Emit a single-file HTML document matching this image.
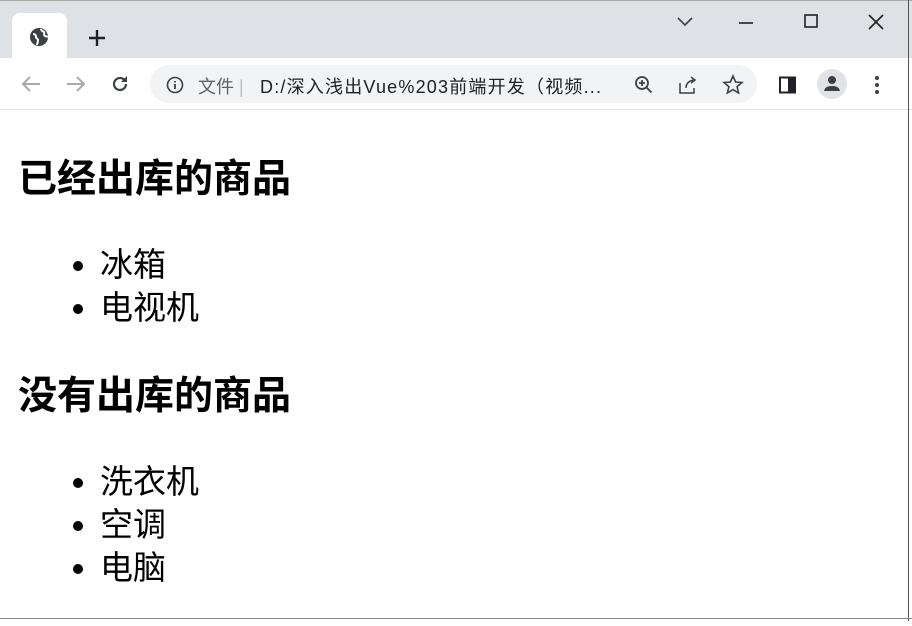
<!DOCTYPE html>
<html><head><meta charset="utf-8"><style>
body{margin:0;width:912px;height:621px;overflow:hidden;background:#fff;font-family:"Liberation Sans","Noto Sans CJK SC",sans-serif;position:relative}
.tabs{position:absolute;left:0;top:0;width:912px;height:58px;background:#dee1e6;border-top:1px solid #aaa;box-sizing:border-box}
.tab{position:absolute;left:12px;top:12px;width:55px;height:46px;background:#fff;border-radius:8px 8px 0 0}
.tool{position:absolute;left:0;top:58px;width:912px;height:51px;background:#fff;border-bottom:1px solid #e3e3e3}
.omni{position:absolute;left:150px;top:7px;width:607px;height:38px;background:#f1f3f4;border-radius:19px}
.url{position:absolute;left:198px;top:15px;font-size:18px;color:#202124;white-space:nowrap}
.url .g{color:#5f6368}
.url .u{position:absolute;left:62px;top:0;letter-spacing:1.2px}
svg{position:absolute}
.content{position:absolute;left:18px;top:150px}
h1{font-size:39px;font-weight:bold;margin:0;line-height:60px;color:#000}
ul{margin:33px 0 37.5px 0;padding-left:82px;font-size:33px;line-height:43px}
.edge{position:absolute;right:3px;top:0;width:1px;height:621px;background:#555}
.bot{position:absolute;left:0;bottom:2px;width:912px;height:1px;background:#888}
</style></head><body>
<div class="tabs"><div class="tab"></div>
<svg style="left:29px;top:26px" width="20" height="20" viewBox="0 0 20 20"><circle cx="10" cy="10" r="9" fill="#3c4043"/><path d="M4 7c2 0 3 1 3 3s2 1 2 3-1 4-1 5M12 2c0 2 2 2 3 3s-1 3 1 4 2 0 3 1" stroke="#fff" stroke-width="2" fill="none"/></svg>
<svg style="left:87px;top:27px" width="20" height="20" viewBox="0 0 20 20"><path d="M10 2v16M2 10h16" stroke="#202124" stroke-width="2.4"/></svg>
<svg style="left:676px;top:15px" width="18" height="12" viewBox="0 0 18 12"><path d="M2 2l7 7 7-7" stroke="#3c4043" stroke-width="1.6" fill="none"/></svg>
<svg style="left:738px;top:20px" width="16" height="4"><path d="M1 2h14" stroke="#202124" stroke-width="1.6"/></svg>
<svg style="left:803px;top:12px" width="16" height="16"><rect x="2" y="2" width="12" height="12" stroke="#202124" stroke-width="1.6" fill="none"/></svg>
<svg style="left:867px;top:12px" width="18" height="18"><path d="M2 2l14 14M16 2L2 16" stroke="#202124" stroke-width="1.6"/></svg>
</div>
<div class="tool">
<svg style="left:20px;top:17px" width="22" height="18" viewBox="0 0 22 18"><path d="M20 9H3M10 2L3 9l7 7" stroke="#aaa" stroke-width="2" fill="none"/></svg>
<svg style="left:65px;top:17px" width="22" height="18" viewBox="0 0 22 18"><path d="M2 9h17M12 2l7 7-7 7" stroke="#aaa" stroke-width="2" fill="none"/></svg>
<svg style="left:110px;top:16px" width="20" height="20" viewBox="0 0 20 20"><path d="M16 10a6 6 0 1 1-2-4.5" stroke="#3c4043" stroke-width="2.2" fill="none"/><path d="M17 2v6h-6z" fill="#3c4043"/></svg>
<div class="omni"></div>
<svg style="left:166px;top:18px" width="18" height="18" viewBox="0 0 18 18"><circle cx="9" cy="9" r="7.5" stroke="#3c4043" stroke-width="1.6" fill="none"/><path d="M9 8v5M9 5v1.5" stroke="#3c4043" stroke-width="1.8"/></svg>
<div class="url"><span class="g">文件</span> <span style="color:#bbb">|</span><span class="u">D:/深入浅出Vue%203前端开发（视频...</span></div>
<svg style="left:634px;top:17px" width="20" height="20" viewBox="0 0 20 20"><circle cx="8" cy="8" r="6" stroke="#3c4043" stroke-width="1.8" fill="none"/><path d="M12.5 12.5l5 5M5 8h6M8 5v6" stroke="#3c4043" stroke-width="1.8"/></svg>
<svg style="left:677px;top:17px" width="22" height="20" viewBox="0 0 22 20"><path d="M3 8v10h14v-5M9 13c0-5 4-8 9-8M14 2l4 3-4 3" stroke="#3c4043" stroke-width="1.5" fill="none"/></svg>
<svg style="left:722px;top:16px" width="22" height="22" viewBox="0 0 22 22"><path d="M11 2l2.6 6 6.4.5-4.9 4.2 1.5 6.3L11 15.6 5.4 19l1.5-6.3L2 8.5 8.4 8z" stroke="#3c4043" stroke-width="1.6" fill="none"/></svg>
<svg style="left:778px;top:18px" width="20" height="18"><rect x="2" y="1.5" width="15" height="15" stroke="#202124" stroke-width="2" fill="none"/><rect x="10" y="2" width="7" height="14" fill="#202124"/></svg>
<svg style="left:817px;top:11px" width="30" height="30" viewBox="0 0 30 30"><circle cx="15" cy="15" r="15" fill="#e1e3e8"/><circle cx="15" cy="11" r="4" fill="#3c4043"/><path d="M7 22c1-4 4-5 8-5s7 1 8 5z" fill="#3c4043"/></svg>
<svg style="left:873px;top:16px" width="8" height="22"><circle cx="4" cy="4" r="2" fill="#3c4043"/><circle cx="4" cy="11" r="2" fill="#3c4043"/><circle cx="4" cy="18" r="2" fill="#3c4043"/></svg>
</div>
<div class="content">
<h1>已经出库的商品</h1>
<ul><li>冰箱</li><li>电视机</li></ul>
<h1>没有出库的商品</h1>
<ul><li>洗衣机</li><li>空调</li><li>电脑</li></ul>
</div>
<div class="edge"></div><div class="bot"></div>
</body></html>
